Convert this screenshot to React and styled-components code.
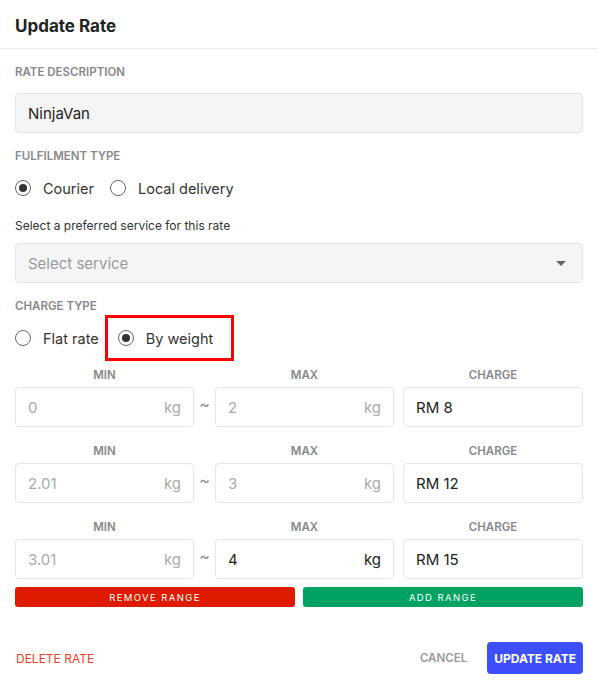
import React from 'react'
import styled, { createGlobalStyle } from 'styled-components'

const GlobalStyle = createGlobalStyle`
    * { box-sizing: border-box; }
    body {
        margin: 0;
        background: #fff;
        font-family: Inter, "Noto Sans", sans-serif;
        color: #222;
    }
`

const ranges = [
    { min: '0', max: '2', charge: 'RM 8', maxActive: false },
    { min: '2.01', max: '3', charge: 'RM 12', maxActive: false },
    { min: '3.01', max: '4', charge: 'RM 15', maxActive: true },
]

const Radio = ({ checked, label }) => (
    <RadioOption>
        <Circle checked={checked} />
        <span>{label}</span>
    </RadioOption>
)

const App = () => {
    return (
        <Modal>
            <GlobalStyle />
            <Header>Update Rate</Header>

            <Body>
                <Label>Rate description</Label>
                <TextBox>NinjaVan</TextBox>

                <Label $top={16}>Fulfilment type</Label>
                <RadioRow $top={13}>
                    <Radio checked label="Courier" />
                    <Radio label="Local delivery" />
                </RadioRow>

                <Hint>Select a preferred service for this rate</Hint>
                <SelectBox>
                    <span>Select service</span>
                    <Caret />
                </SelectBox>

                <Label $top={16}>Charge type</Label>
                <RadioRow $top={2}>
                    <Radio label="Flat rate" />
                    <Highlight>
                        <Radio checked label="By weight" />
                    </Highlight>
                </RadioRow>

                {ranges.map((r, id) => (
                    <RangeGrid key={id} $top={id === 0 ? 7 : 17}>
                        <ColLabel>Min</ColLabel>
                        <span />
                        <ColLabel>Max</ColLabel>
                        <span />
                        <ColLabel>Charge</ColLabel>

                        <Box>
                            <Value>{r.min}</Value>
                            <Value>kg</Value>
                        </Box>
                        <Tilde>~</Tilde>
                        <Box>
                            <Value $active={r.maxActive}>{r.max}</Value>
                            <Value $active={r.maxActive}>kg</Value>
                        </Box>
                        <span />
                        <Box>
                            <Value $active>{r.charge}</Value>
                        </Box>
                    </RangeGrid>
                ))}

                <RangeButtons>
                    <SmallButton $bg="#de1a00">Remove range</SmallButton>
                    <SmallButton $bg="#00a262">Add range</SmallButton>
                </RangeButtons>
            </Body>

            <Footer>
                <DeleteLink>Delete rate</DeleteLink>
                <Actions>
                    <CancelLink>Cancel</CancelLink>
                    <PrimaryButton>Update rate</PrimaryButton>
                </Actions>
            </Footer>
        </Modal>
    )
}

const Modal = styled.div`
    width: 598px;
    height: 685px;
    background: #fff;
    display: flex;
    flex-direction: column;
`

const Header = styled.div`
    height: 49px;
    padding: 3px 15px 0;
    display: flex;
    align-items: center;
    border-bottom: 1px solid #ececec;
    font-size: 17px;
    font-weight: 700;
    color: #222;
`

const Body = styled.div`
    padding: 16px 15px 0;
`

const Label = styled.div`
    margin-top: ${p => p.$top || 0}px;
    font-size: 11.5px;
    line-height: 14px;
    font-weight: 600;
    color: #888;
    text-transform: uppercase;
`

const TextBox = styled.div`
    margin-top: 14px;
    height: 40px;
    border: 1px solid #e6e6e6;
    border-radius: 4px;
    background: #f5f5f5;
    padding: 0 12px;
    display: flex;
    align-items: center;
    font-size: 15px;
    color: #222;
`

const RadioRow = styled.div`
    margin-top: ${p => p.$top}px;
    display: flex;
    align-items: center;
`

const RadioOption = styled.div`
    display: flex;
    align-items: center;
    height: 24px;
    margin-right: 16px;
    font-size: 14.5px;
    color: #333;
    gap: 12px;
    white-space: nowrap;
`

const Circle = styled.span`
    width: 16px;
    height: 16px;
    border-radius: 50%;
    border: 1.5px solid #666;
    display: flex;
    align-items: center;
    justify-content: center;

    &::after {
        content: '';
        width: 8px;
        height: 8px;
        border-radius: 50%;
        background: ${p => (p.checked ? '#333' : 'transparent')};
    }
`

const Highlight = styled.div`
    height: 46px;
    margin-left: -10px;
    padding: 0 2px 0 10px;
    border: 3px solid #ff0000;
    display: flex;
    align-items: center;
`

const Hint = styled.div`
    margin-top: 18px;
    font-size: 12px;
    line-height: 16px;
    color: #333;
`

const SelectBox = styled(TextBox)`
    margin-top: 9px;
    justify-content: space-between;
    color: #999;
    padding-right: 16px;
`

const Caret = styled.span`
    width: 0;
    height: 0;
    border-left: 5px solid transparent;
    border-right: 5px solid transparent;
    border-top: 5px solid #666;
`

const RangeGrid = styled.div`
    margin-top: ${p => p.$top}px;
    display: grid;
    grid-template-columns: 179px 21px 179px 9px 180px;
    row-gap: 5px;
    align-items: center;
`

const ColLabel = styled(Label)`
    text-align: center;
`

const Box = styled.div`
    height: 40px;
    border: 1px solid #e6e6e6;
    border-radius: 4px;
    padding: 0 12px;
    display: flex;
    align-items: center;
    justify-content: space-between;
    font-size: 15px;
`

const Value = styled.span`
    color: ${p => (p.$active ? '#222' : '#aaa')};
`

const Tilde = styled.span`
    text-align: center;
    color: #888;
    font-size: 16px;
    margin-top: -6px;
`

const RangeButtons = styled.div`
    margin-top: 8px;
    display: grid;
    grid-template-columns: 280px 280px;
    gap: 8px;
`

const SmallButton = styled.button`
    height: 20px;
    border: none;
    border-radius: 3px;
    background: ${p => p.$bg};
    color: #fff;
    font-family: inherit;
    font-size: 9.5px;
    letter-spacing: 1.4px;
    text-transform: uppercase;
`

const Footer = styled.div`
    margin-top: 35px;
    padding: 0 15px 0 16px;
    display: flex;
    align-items: center;
    justify-content: space-between;
`

const DeleteLink = styled.span`
    font-size: 12px;
    color: #f23d2a;
    text-transform: uppercase;
`

const Actions = styled.div`
    display: flex;
    align-items: center;
    gap: 20px;
`

const CancelLink = styled.span`
    font-size: 11.5px;
    font-weight: 600;
    color: #999;
    text-transform: uppercase;
`

const PrimaryButton = styled.button`
    height: 32px;
    padding: 0 7px;
    border: none;
    border-radius: 4px;
    background: #3d4ffd;
    color: #fff;
    font-family: inherit;
    font-size: 12px;
    font-weight: 700;
    text-transform: uppercase;
`

export default App
